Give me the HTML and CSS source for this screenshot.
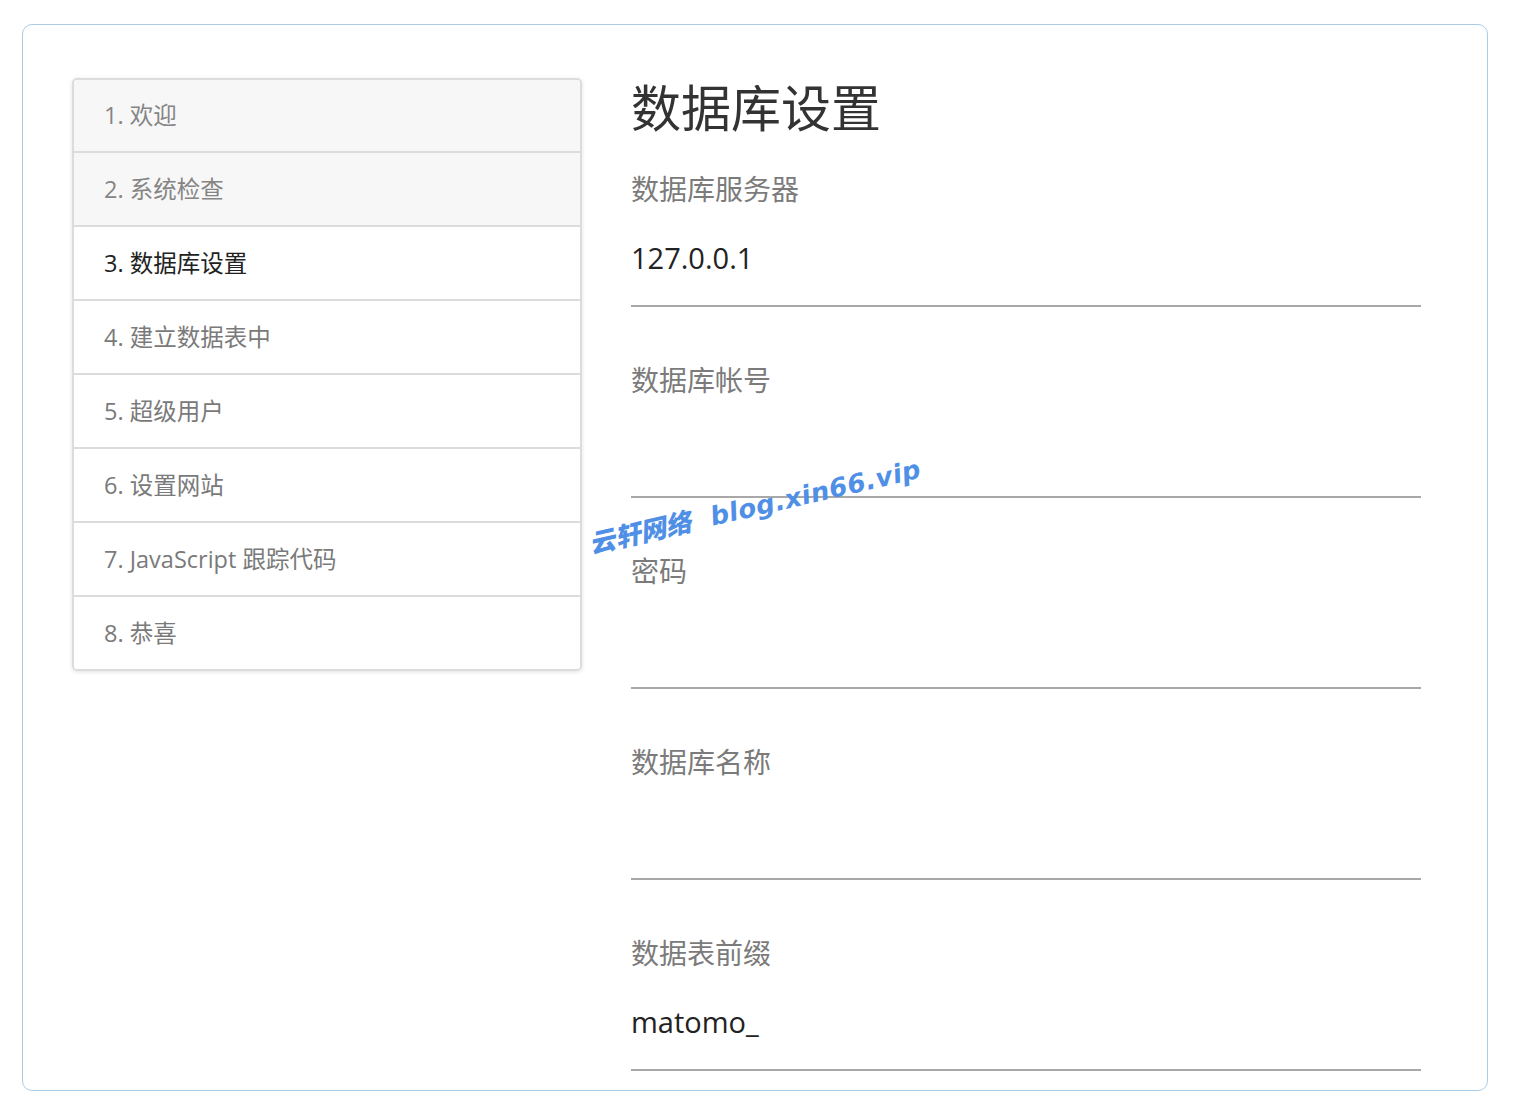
FILE: index.html
```html
<!DOCTYPE html>
<html lang="zh-CN">
<head>
  <meta charset="UTF-8">
  <title>Matomo 安装 - 数据库设置</title>
  <link rel="stylesheet" href="styles.css">
</head>
<body>
  <div class="installer">
    <div class="installer-row">
      <ul class="steps">
        <li class="step done">1. 欢迎</li>
        <li class="step done">2. 系统检查</li>
        <li class="step active">3. 数据库设置</li>
        <li class="step">4. 建立数据表中</li>
        <li class="step">5. 超级用户</li>
        <li class="step">6. 设置网站</li>
        <li class="step">7. JavaScript 跟踪代码</li>
        <li class="step">8. 恭喜</li>
      </ul>
      <form class="db-form">
        <h1>数据库设置</h1>
        <div class="field">
          <label for="host">数据库服务器</label>
          <input id="host" type="text" value="127.0.0.1">
        </div>
        <div class="field">
          <label for="username">数据库帐号</label>
          <input id="username" type="text" value="">
        </div>
        <div class="field">
          <label for="password">密码</label>
          <input id="password" type="password" value="">
        </div>
        <div class="field">
          <label for="dbname">数据库名称</label>
          <input id="dbname" type="text" value="">
        </div>
        <div class="field">
          <label for="prefix">数据表前缀</label>
          <input id="prefix" type="text" value="matomo_">
        </div>
      </form>
    </div>
    <div class="watermark">云轩网络 <span>blog.xin66.vip</span></div>
  </div>
</body>
</html>
```

FILE: styles.css
```css
body {
  margin: 0;
  background: #fff;
  font-family: 'Open Sans', 'Noto Sans CJK SC', sans-serif;
  color: #333;
}
.installer {
  position: relative;
  margin: 24px 32px 0 22px;
  border: 1px solid #a9cce6;
  border-radius: 10px;
  padding: 53px 67px 19px 49px;
}
.installer-row {
  display: grid;
  grid-template-columns: 510px 790px;
  column-gap: 49px;
  align-items: start;
}

/* step list */
.steps {
  list-style: none;
  margin: 0;
  padding: 0;
  border: 2px solid #dcdcdc;
  border-radius: 5px;
  box-shadow: 0 1px 4px rgba(0,0,0,0.12);
  overflow: hidden;
}
.step {
  height: 72px;
  line-height: 72px;
  padding-left: 30px;
  font-size: 23.5px;
  color: #7a7a7a;
  background: #fff;
  border-top: 2px solid #dcdcdc;
}
.step:first-child {
  border-top: 0;
  height: 71px;
  line-height: 71px;
}
.step.done {
  background: #f7f7f7;
  color: #858585;
}
.step.active {
  color: #222;
}

/* form */
.db-form h1 {
  margin: 0 0 36px 0;
  font-size: 50px;
  line-height: 60px;
  font-weight: normal;
  color: #333;
}
.field + .field {
  margin-top: 58px;
}
.field label {
  display: block;
  font-size: 28px;
  line-height: 30px;
  color: #7b7b7b;
}
.field input {
  display: block;
  box-sizing: content-box;
  width: 100%;
  margin: 36px 0 0 0;
  padding: 0 0 29px 0;
  height: 36px;
  line-height: 36px;
  border: 0;
  border-bottom: 2px solid #a8a8a8;
  outline: none;
  background: transparent;
  font-family: 'Open Sans', 'Noto Sans CJK SC', sans-serif;
  font-size: 29px;
  color: #222;
}

.watermark {
  position: absolute;
  left: 566px;
  top: 499px;
  transform: rotate(-13deg);
  transform-origin: left center;
  font-family: 'Noto Sans CJK SC', sans-serif;
  font-size: 26px;
  font-weight: 900;
  font-style: italic;
  color: #4f8fe6;
  white-space: nowrap;
  pointer-events: none;
}
.watermark span {
  margin-left: 14px;
  font-family: 'DejaVu Sans', sans-serif;
  font-weight: bold;
  letter-spacing: 0.5px;
}
```
